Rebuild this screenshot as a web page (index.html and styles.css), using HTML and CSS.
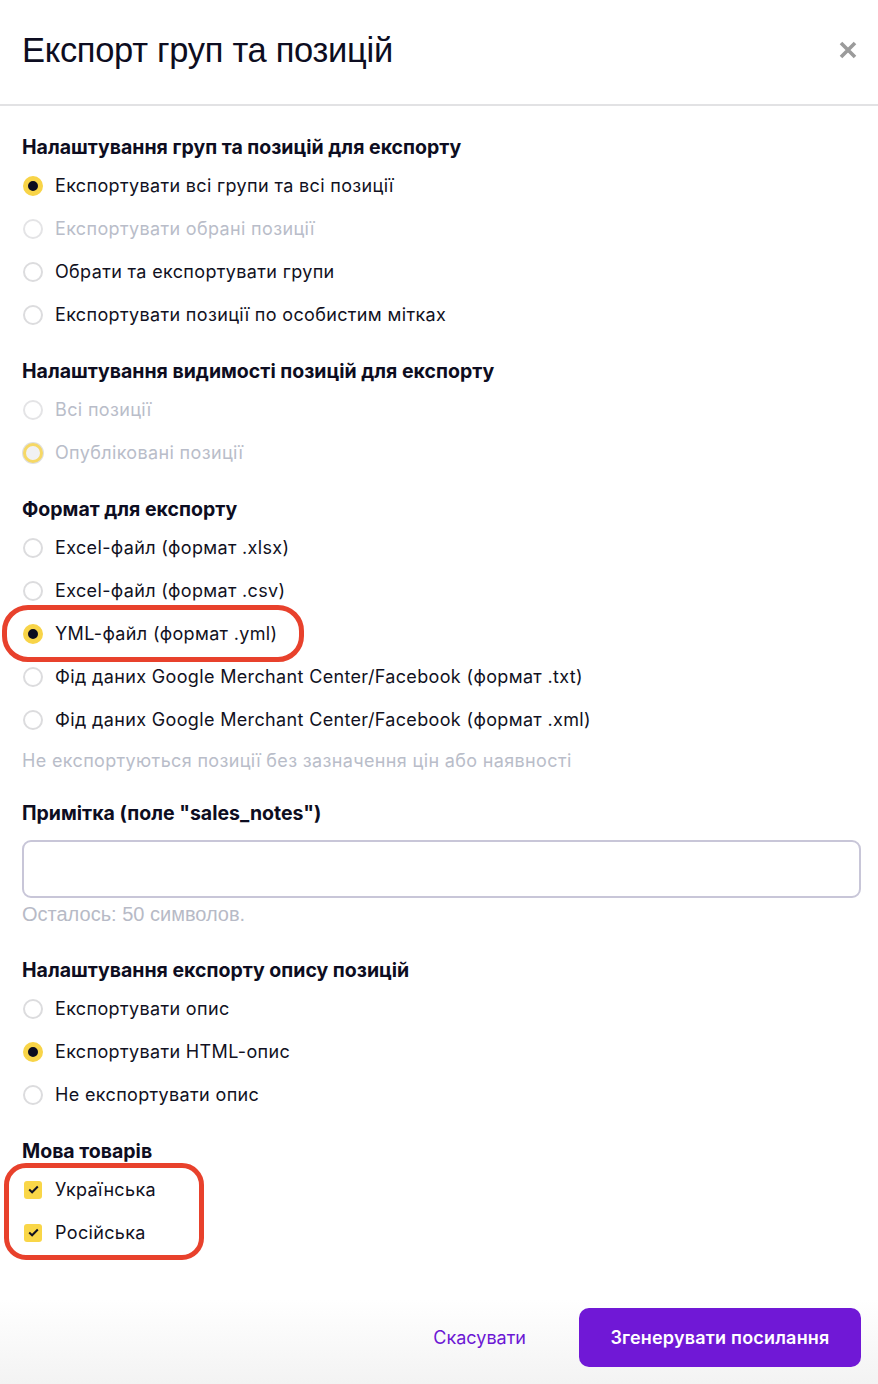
FILE: index.html
```html
<!DOCTYPE html>
<html lang="uk">
<head>
<meta charset="utf-8">
<title>Експорт груп та позицій</title>
<link rel="stylesheet" href="styles.css">
</head>
<body>
<div class="modal">
  <header class="modal-header">
    <h1 class="modal-title">Експорт груп та позицій</h1>
    <button class="close-btn" aria-label="Закрити">
      <svg width="20" height="20" viewBox="0 0 20 20"><path d="M3 3 L17 17 M17 3 L3 17" stroke="#9b9b9b" stroke-width="3.6" stroke-linecap="butt"/></svg>
    </button>
  </header>

  <div class="modal-body">
    <section class="group first">
      <h2 class="group-title">Налаштування груп та позицій для експорту</h2>
      <label class="row"><span class="radio checked"></span><span class="label">Експортувати всі групи та всі позиції</span></label>
      <label class="row disabled"><span class="radio"></span><span class="label">Експортувати обрані позиції</span></label>
      <label class="row"><span class="radio"></span><span class="label">Обрати та експортувати групи</span></label>
      <label class="row"><span class="radio"></span><span class="label">Експортувати позиції по особистим мітках</span></label>
    </section>

    <section class="group">
      <h2 class="group-title">Налаштування видимості позицій для експорту</h2>
      <label class="row disabled"><span class="radio"></span><span class="label">Всі позиції</span></label>
      <label class="row disabled"><span class="radio checked-disabled"></span><span class="label">Опубліковані позиції</span></label>
    </section>

    <section class="group">
      <h2 class="group-title">Формат для експорту</h2>
      <label class="row"><span class="radio"></span><span class="label">Excel-файл (формат .xlsx)</span></label>
      <label class="row"><span class="radio"></span><span class="label">Excel-файл (формат .csv)</span></label>
      <label class="row highlighted"><span class="radio checked"></span><span class="label">YML-файл (формат .yml)</span><span class="mark mark-yml"></span></label>
      <label class="row"><span class="radio"></span><span class="label">Фід даних Google Merchant Center/Facebook (формат .txt)</span></label>
      <label class="row"><span class="radio"></span><span class="label">Фід даних Google Merchant Center/Facebook (формат .xml)</span></label>
      <p class="hint">Не експортуються позиції без зазначення цін або наявності</p>
    </section>

    <section class="group note">
      <h2 class="group-title">Примітка (поле "sales_notes")</h2>
      <textarea class="note-input"></textarea>
      <p class="counter">Осталось: 50 символов.</p>
    </section>

    <section class="group desc">
      <h2 class="group-title">Налаштування експорту опису позицій</h2>
      <label class="row"><span class="radio"></span><span class="label">Експортувати опис</span></label>
      <label class="row"><span class="radio checked"></span><span class="label">Експортувати HTML-опис</span></label>
      <label class="row"><span class="radio"></span><span class="label">Не експортувати опис</span></label>
    </section>

    <section class="group">
      <h2 class="group-title">Мова товарів</h2>
      <div class="checks">
        <span class="mark mark-lang"></span>
        <label class="row"><span class="checkbox"><svg width="11" height="9" viewBox="0 0 11 9"><path d="M1.2 4.6 L4.1 7.3 L9.8 1.5" fill="none" stroke="#111122" stroke-width="2"/></svg></span><span class="label">Українська</span></label>
        <label class="row"><span class="checkbox"><svg width="11" height="9" viewBox="0 0 11 9"><path d="M1.2 4.6 L4.1 7.3 L9.8 1.5" fill="none" stroke="#111122" stroke-width="2"/></svg></span><span class="label">Російська</span></label>
      </div>
    </section>
  </div>

  <footer class="modal-footer">
    <button class="btn-link">Скасувати</button>
    <button class="btn-primary">Згенерувати посилання</button>
  </footer>
</div>
</body>
</html>
```

FILE: styles.css
```css
* { box-sizing: border-box; }
html, body { margin: 0; padding: 0; background: #fff; }
body {
  font-family: Inter, "Liberation Sans", Arial, sans-serif;
  color: #111122;
  font-size: 18px;
  letter-spacing: 0.35px;
}
.modal { width: 878px; min-height: 1384px; display: flex; flex-direction: column; }

.modal-header {
  height: 106px;
  display: flex;
  align-items: center;
  justify-content: space-between;
  padding: 0 20px 4px 22px;
  border-bottom: 2px solid #e2e2e4;
}
.modal-title {
  margin: 0;
  font-family: "Liberation Sans", Arial, sans-serif;
  font-size: 34.5px;
  font-weight: 400;
  color: #0d0d21;
  letter-spacing: -0.3px;
}
.close-btn {
  border: 0; background: none; padding: 0; width: 20px; height: 20px;
  display: flex; align-items: center; justify-content: center;
}

.modal-body { padding: 30px 22px 0 22px; }
.group { margin-top: 24px; }
.group.first { margin-top: 0; }
.group.note { margin-top: 30px; }
.group.desc { margin-top: 35px; }
.group-title {
  margin: 0 0 6px 0;
  font-size: 19.5px;
  line-height: 22px;
  font-weight: 700;
  letter-spacing: 0;
  color: #0d0d21;
}
.row {
  position: relative;
  display: flex;
  align-items: center;
  height: 43px;
  gap: 12px;
  padding-left: 1px;
}
.label { line-height: 22px; }
.row.disabled .label { color: #b9bdc9; }

.radio {
  width: 20px; height: 20px; border-radius: 50%;
  border: 2px solid #dcdcde;
  background: #fff;
  flex: none;
}
.row.disabled .radio { border-color: #e4e4e6; }
.row .radio.checked {
  border: 5px solid #f8d448;
  background: #0b0b1f;
}
.row .radio.checked-disabled {
  border: 3px solid #f6d865;
  background: #f1f1f3;
  box-shadow: 0 0 0 1px #e0e0e0;
}
.checkbox {
  width: 18px; height: 18px; border-radius: 3px;
  background: #f9d648;
  margin-left: 1px; margin-right: 1px;
  flex: none;
  display: flex; align-items: center; justify-content: center;
}

.hint {
  margin: 9px 0 0 0;
  line-height: 22px;
  color: #b9bdc9;
}
.note-input {
  display: block;
  width: 839px; height: 58px;
  margin-top: 16px;
  border: 2px solid #c8c6d8;
  border-radius: 9px;
  resize: none;
  font: inherit;
}
.counter {
  margin: 6px 0 0 0;
  line-height: 20px;
  font-family: "Liberation Sans", Arial, sans-serif;
  font-size: 20px;
  letter-spacing: 0;
  color: #b7bac6;
}
.checks { position: relative; }

.mark {
  position: absolute;
  border: 5px solid #e8412c;
  pointer-events: none;
}
.mark-yml { left: -20px; top: -7px; width: 302px; height: 57px; border-radius: 26px; }
.mark-lang { left: -18px; top: -5px; width: 200px; height: 97px; border-radius: 22px; }

.modal-footer {
  margin-top: auto;
  display: flex;
  justify-content: flex-end;
  align-items: center;
  padding: 54px 17px 17px 22px;
  background: linear-gradient(#ffffff 35%, #f3f3f3 100%);
}
.btn-link {
  border: 0; background: none; padding: 0;
  font: inherit; font-size: 18px;
  color: #6c17d4;
  margin-right: 53px;
}
.btn-primary {
  border: 0;
  width: 282px; height: 59px;
  border-radius: 10px;
  background: #7018d6;
  color: #fff;
  font: inherit; font-size: 18px; font-weight: 600;
  letter-spacing: 0.2px;
}
```
